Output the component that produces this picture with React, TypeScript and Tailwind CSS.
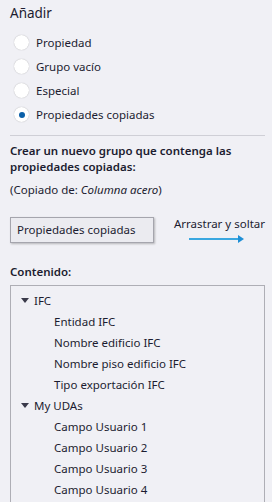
const ifcItems = [
  "Entidad IFC",
  "Nombre edificio IFC",
  "Nombre piso edificio IFC",
  "Tipo exportación IFC",
];

const udaItems = [
  "Campo Usuario 1",
  "Campo Usuario 2",
  "Campo Usuario 3",
  "Campo Usuario 4",
];

const options = ["Propiedad", "Grupo vacío", "Especial", "Propiedades copiadas"];

const Radio = ({ checked }: { checked?: boolean }) => (
  <span className="flex h-[15px] w-[15px] items-center justify-center rounded-full bg-white shadow-[0_0_1px_rgba(0,0,0,0.35)]">
    {checked && <span className="h-[6px] w-[6px] rounded-full bg-[#0a5fa8]" />}
  </span>
);

const Caret = () => (
  <svg width="8" height="5" viewBox="0 0 8 5" className="mr-[5px]">
    <path d="M0 0h8L4 5z" fill="#3a3a4a" />
  </svg>
);

const App = () => {
  return (
    <div
      className="h-[502px] w-[272px] overflow-hidden bg-[#f0f0f5] pl-[10px] pr-[7px] pt-[3px] text-[11.5px] text-[#1c1c30]"
      style={{ fontFamily: '"Noto Sans", "Open Sans", sans-serif' }}
    >
      <h2 className="text-[13.5px] leading-[20px]">Añadir</h2>
      <div className="mt-[12px] flex flex-col gap-[9px] pl-[4px]">
        {options.map((o, i) => (
          <label key={o} className="flex h-[15px] items-center gap-[7px]">
            <Radio checked={i === 3} />
            <span>{o}</span>
          </label>
        ))}
      </div>
      <div className="mt-[13px] border-t border-[#cfcfd6]" />
      <p className="mt-[7px] font-semibold leading-[16px]">
        Crear un nuevo grupo que contenga las propiedades copiadas:
      </p>
      <p className="mt-[7px] leading-[16px]">
        (Copiado de: <i>Columna acero</i>)
      </p>
      <div className="mt-[19px] flex items-start">
        <div className="flex h-[26px] w-[148px] items-center border border-[#a5a5ad] bg-[#ebebf0] pl-[6px] shadow-[1px_1px_2px_rgba(0,0,0,0.25)]">
          Propiedades copiadas
        </div>
        <div className="ml-[20px] mt-[-1px] flex flex-col whitespace-nowrap">
          <span className="leading-[16px]">Arrastrar y soltar</span>
          <svg width="56" height="8" viewBox="0 0 56 8" className="ml-[15px] mt-[3px]">
            <line x1="0" y1="4" x2="50" y2="4" stroke="#3aa7e0" strokeWidth="2" />
            <path d="M49 0l6 4-6 4z" fill="#1f8fd6" />
          </svg>
        </div>
      </div>
      <p className="mt-[21px] font-semibold leading-[16px]">Contenido:</p>
      <div className="mt-[5px] h-[260px] border border-[#aeaeb5] pl-[10px] pt-[4px]">
        <div className="flex h-[21px] items-center">
          <Caret />
          IFC
        </div>
        {ifcItems.map((t) => (
          <div key={t} className="flex h-[21px] items-center pl-[33px]">
            {t}
          </div>
        ))}
        <div className="flex h-[21px] items-center">
          <Caret />
          My UDAs
        </div>
        {udaItems.map((t) => (
          <div key={t} className="flex h-[21px] items-center pl-[33px]">
            {t}
          </div>
        ))}
      </div>
    </div>
  );
};

export default App;
